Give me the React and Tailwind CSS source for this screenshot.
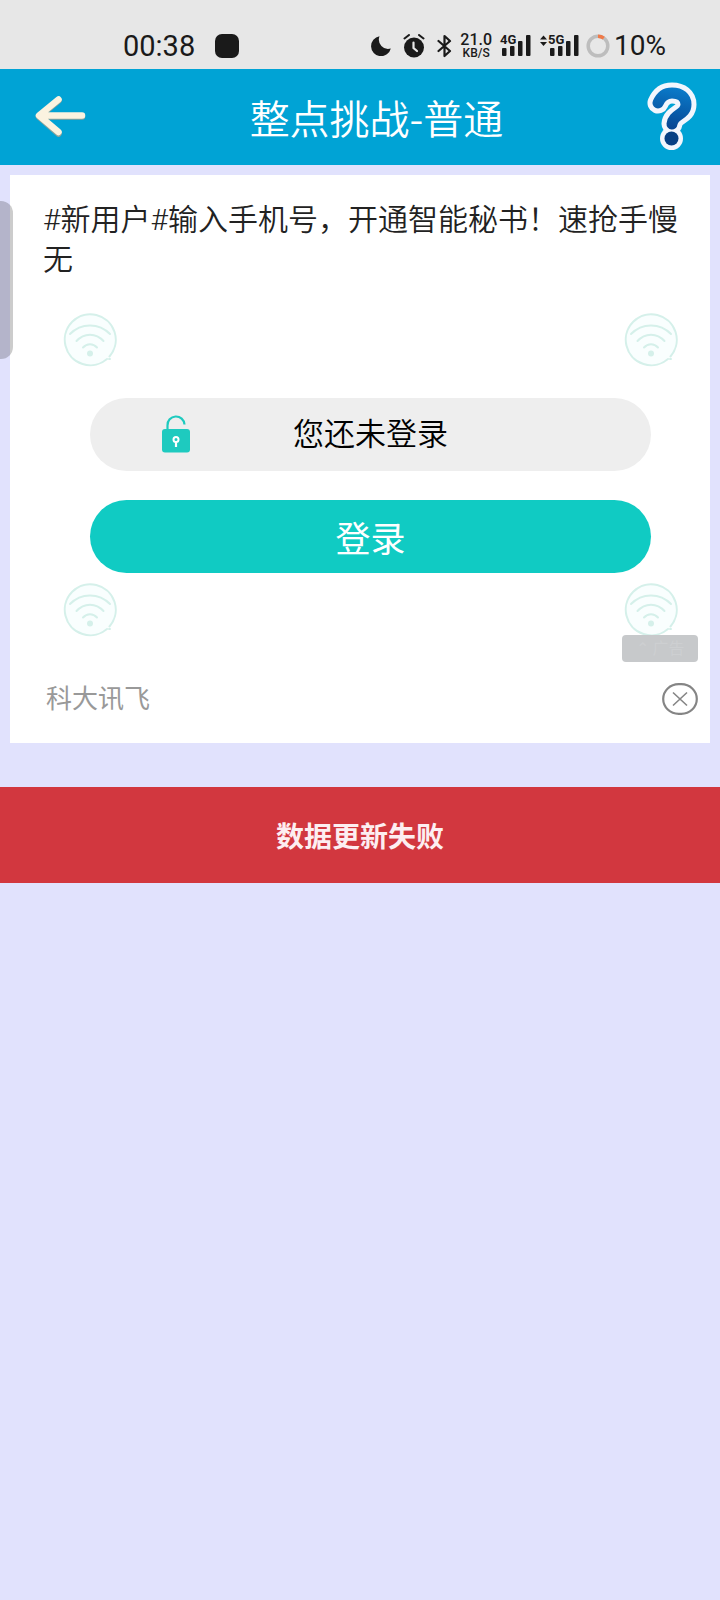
const SIGNAL_BARS = [
  { x: 2, h: 8 },
  { x: 10, h: 10 },
  { x: 18, h: 15 },
  { x: 26, h: 21 },
];

function Signal({ label, arrows }) {
  return (
    <div className="flex text-[#1a1a1a]">
      {arrows && (
        <svg width="9" height="23" viewBox="0 0 9 23" fill="currentColor">
          <path d="M4.500 1.500 8 5.500H1zM4.500 12 8 8H1z" />
        </svg>
      )}
      <div className="relative w-[31px] h-[23px]">
        <svg width="31" height="23" viewBox="0 0 31 23" fill="currentColor">
          {SIGNAL_BARS.map(({ x, h }) => (
            <rect key={x} x={x} y={22 - h} width="4.500" height={h} rx="1" />
          ))}
        </svg>
        <span className="absolute left-0 top-0 h-3 bg-[#e7e7e7] text-[13px] leading-3 font-bold">{label}</span>
      </div>
    </div>
  );
}

function StatusBar() {
  return (
    <div className="h-[69px] pt-[22px] pl-[123px] pr-[54px] flex items-center justify-between bg-[#e7e7e7] text-[#1a1a1a]">
      <div className="flex items-center gap-5">
        <span className="text-[29px] leading-8">00:38</span>
        <span className="w-6 h-6 rounded-[7px] bg-[#1a1a1a]" />
      </div>
      <div className="flex items-center">
        <svg className="mr-3" width="20" height="20" viewBox="0 0 20 20" fill="currentColor">
          <path d="M8.500 0.300A10 10 0 1 0 19.800 12.500 9.300 9.300 0 0 1 8.500 0.300z" />
        </svg>
        <svg className="mr-3" width="22" height="24" viewBox="0 0 22 24">
          <circle cx="11" cy="13.500" r="10" fill="currentColor" />
          <path d="M1.500 4.500 6 1M20.500 4.500 16 1" stroke="currentColor" strokeWidth="2" strokeLinecap="round" />
          <path d="M10.500 8.500V14l3.500 3" fill="none" stroke="#e7e7e7" strokeWidth="2.200" strokeLinecap="round" />
        </svg>
        <svg className="mr-2" width="15" height="24" viewBox="0 0 15 24" fill="none" stroke="currentColor" strokeWidth="2.200" strokeLinejoin="round" strokeLinecap="round">
          <path d="M1.500 7 13 17 7.500 22V2L13 7 1.500 17" />
        </svg>
        <div className="mr-2 flex flex-col items-center font-medium">
          <span className="text-base leading-[15px]">21.0</span>
          <span className="text-xs leading-3">KB/S</span>
        </div>
        <div className="mr-2">
          <Signal label="4G" />
        </div>
        <div className="mr-[7px]">
          <Signal label="5G" arrows />
        </div>
        <svg className="mr-1" width="24" height="24" viewBox="0 0 24 24" fill="none" strokeWidth="3.500">
          <circle cx="12" cy="12" r="9.800" stroke="#bdbdbd" />
          <path d="M12 2.200A9.800 9.800 0 0 1 17.800 4.100" stroke="#f07a48" />
        </svg>
        <span className="text-[28px] leading-8">10%</span>
      </div>
    </div>
  );
}

function Header() {
  return (
    <header className="h-24 pl-[35px] pr-[22px] flex items-center bg-[#00a3d5]">
      <button aria-label="返回" className="w-[52px]">
        <svg width="52" height="42" viewBox="0 0 52 42" fill="none" strokeWidth="6.500" strokeLinecap="round" strokeLinejoin="round">
          <path d="M23.500 4.500 4 20.500 23.500 37.500M5 20.500H47" stroke="#8fa39a" />
          <path d="M23.500 3.500 4 19.500 23.500 36M5 19.500H47" stroke="#fbf3e0" />
        </svg>
      </button>
      <h1 className="flex-1 pl-5 text-center font-['Noto_Sans_CJK_SC',sans-serif] text-[40px] leading-[54px] font-[350] text-white">整点挑战-普通</h1>
      <button aria-label="帮助" className="w-[52px]">
        <svg width="52" height="72" viewBox="0 0 52 72" fill="none" strokeLinecap="round" strokeLinejoin="round">
          <defs>
            <linearGradient id="helpBlue" gradientUnits="userSpaceOnUse" x1="30" y1="6" x2="22" y2="52">
              <stop offset="0" stopColor="#0a7ccb" />
              <stop offset="1" stopColor="#073f8c" />
            </linearGradient>
          </defs>
          <path d="M12 22C15 15 20 12 26 12C34.500 12 40 16.500 40 23.500C40 34 27 33 26 43" stroke="#f3f6fd" strokeWidth="21" />
          <circle cx="25.500" cy="57.500" r="11.500" fill="#f3f6fd" />
          <path d="M12 22C15 15 20 12 26 12C34.500 12 40 16.500 40 23.500C40 34 27 33 26 43" stroke="url(#helpBlue)" strokeWidth="11" />
          <circle cx="25.500" cy="57.500" r="7" fill="#073f83" />
        </svg>
      </button>
    </header>
  );
}

function WifiBadge() {
  return (
    <svg width="54" height="54" viewBox="0 0 54 54" fill="none" stroke="#d5f0ea" strokeWidth="2" strokeLinecap="round">
      <path d="M46.500 43.500A25.500 25.500 0 1 0 44 46" fill="#f9fefe" />
      <path d="M46 46l1 0" />
      <path d="M7 21C18 9.500 36 9.500 47 21M13.500 28C21 19.500 33 19.500 40.500 28M20 34.500C24 30 30 30 34 34.500" />
      <circle cx="27" cy="40.500" r="2" fill="#d5f0ea" />
    </svg>
  );
}

function WifiRow() {
  return (
    <div className="flex justify-between px-5">
      <WifiBadge />
      <WifiBadge />
    </div>
  );
}

function AdCard() {
  return (
    <section className="mx-[10px] mt-[10px] pl-[33px] pr-3 pt-[25px] pb-7 bg-white">
      <p className="text-[30px] leading-10 font-[350] text-[#222]">#新用户#输入手机号，开通智能秘书！速抢手慢无</p>

      <div className="mt-[33px]">
        <WifiRow />
        <div className="mx-[47px] mt-[31px] mb-[10px] flex flex-col gap-[29px]">
          <div className="relative h-[73px] rounded-full bg-[#eee] flex items-center justify-center">
            <svg className="absolute left-[72px] top-[17px]" width="28" height="38" viewBox="0 0 28 38">
              <path d="M5.500 15V10.500a8.500 8.500 0 0 1 17 -1" fill="none" stroke="#1ecabf" strokeWidth="2.200" />
              <rect x="0" y="14" width="28" height="23.500" rx="3" fill="#1ecabf" />
              <circle cx="14" cy="24.500" r="2.500" fill="none" stroke="#fff" strokeWidth="2" />
              <path d="M14 27V32" stroke="#fff" strokeWidth="2.200" />
            </svg>
            <span className="text-[31px] leading-10 font-[350] text-black">您还未登录</span>
          </div>
          <button className="h-[73px] rounded-full bg-[#10cbc3] font-['Noto_Sans_CJK_SC',sans-serif] text-[35px] leading-10 text-white">
            登录
          </button>
        </div>
        <div className="relative">
          <WifiRow />
          <span className="absolute right-0 top-[52px] w-[76px] h-[27px] rounded bg-[#c7c9cb] text-center text-base leading-7 text-[#cdcfd1]">
            ⌃ 广告
          </span>
        </div>
      </div>

      <div className="mt-[46px] pl-[3px] flex items-center justify-between">
        <span className="text-[26px] leading-8 text-[#999]">科大讯飞</span>
        <button aria-label="关闭广告">
          <svg width="36" height="32" viewBox="0 0 36 32" fill="none" stroke="#858585">
            <rect x="1.200" y="1.200" width="33.600" height="29.600" rx="15.500" strokeWidth="2.200" />
            <path d="M11 9.500 25 22.500M25 9.500 11 22.500" strokeWidth="1.600" />
          </svg>
        </button>
      </div>
    </section>
  );
}

export default function App() {
  return (
    <div className="relative min-h-screen bg-[#e1e2fd] font-[Roboto,'Noto_Sans_CJK_SC',sans-serif]">
      <StatusBar />
      <Header />
      <main>
        <AdCard />
        <div role="alert" className="mt-11 h-24 flex items-center justify-center bg-[#d2373f] font-['Noto_Sans_CJK_SC',sans-serif] text-[28px] leading-10 font-bold text-[#fdeef1]">
          数据更新失败
        </div>
      </main>
      {/* edge panel handle */}
      <div className="absolute left-0 top-[201px] w-[13px] h-[158px] rounded-r-xl bg-black/20" />
    </div>
  );
}
